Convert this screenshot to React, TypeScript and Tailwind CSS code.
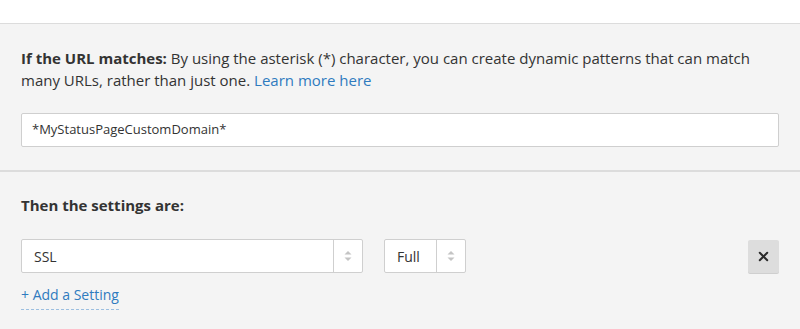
import { X } from "lucide-react";

function Arrows() {
  return (
    <svg width="8" height="12" viewBox="0 0 8 12" className="text-[#c4c4c4]">
      <path d="M4 1 L7.5 4.5 L0.5 4.5 Z" fill="currentColor" />
      <path d="M4 11 L7.5 7.5 L0.5 7.5 Z" fill="currentColor" />
    </svg>
  );
}

function Select({ value, width }: { value: string; width: string }) {
  return (
    <div
      className={`flex h-[34px] ${width} rounded-[2px] border border-[#cfcfcf] bg-white text-[14px] text-[#333]`}
    >
      <div className="flex flex-1 items-center pl-[12px]">{value}</div>
      <div className="flex w-[29px] items-center justify-center border-l border-[#cfcfcf]">
        <Arrows />
      </div>
    </div>
  );
}

export default function App() {
  return (
    <div
      className="h-[329px] w-[800px] overflow-hidden bg-[#f4f4f4] text-[#333]"
      style={{ fontFamily: '"Open Sans", "Liberation Sans", sans-serif' }}
    >
      <div className="h-[24px] border-b border-[#dcdcdc] bg-white" />

      <div className="px-[21px] pt-[23px] pb-[23px]">
        <p className="text-[15px] leading-[22px]">
          <span className="font-bold">If the URL matches:</span> By using the
          asterisk (*) character, you can create dynamic patterns that can match
          many URLs, rather than just one.{" "}
          <a className="text-[#2f7bbf]">Learn more here</a>
        </p>
        <div className="mt-[22px] flex h-[34px] items-center rounded-[2px] border border-[#cfcfcf] bg-white pl-[10px] text-[13px]">
          *MyStatusPageCustomDomain*
        </div>
      </div>

      <div className="h-[2px] bg-[#dcdcdc]" />

      <div className="px-[21px] pt-[22px]">
        <h3 className="text-[15px] font-bold leading-[22px]">
          Then the settings are:
        </h3>
        <div className="mt-[23px] flex items-center">
          <Select value="SSL" width="w-[342px]" />
          <div className="ml-[21px]">
            <Select value="Full" width="w-[82px]" />
          </div>
          <button className="ml-auto flex h-[33px] w-[31px] items-center justify-center rounded-[2px] bg-[#dddddd] shadow-[0_1px_0_#cfcfcf]">
            <X size={15} strokeWidth={3.2} className="text-[#2b2b2b]" />
          </button>
        </div>
        <div className="mt-[11px] flex">
          <a className="border-b border-dashed border-[#9cbfe0] pb-[4px] text-[14px] leading-[21px] text-[#2f7bbf]">
            + Add a Setting
          </a>
        </div>
      </div>
    </div>
  );
}
